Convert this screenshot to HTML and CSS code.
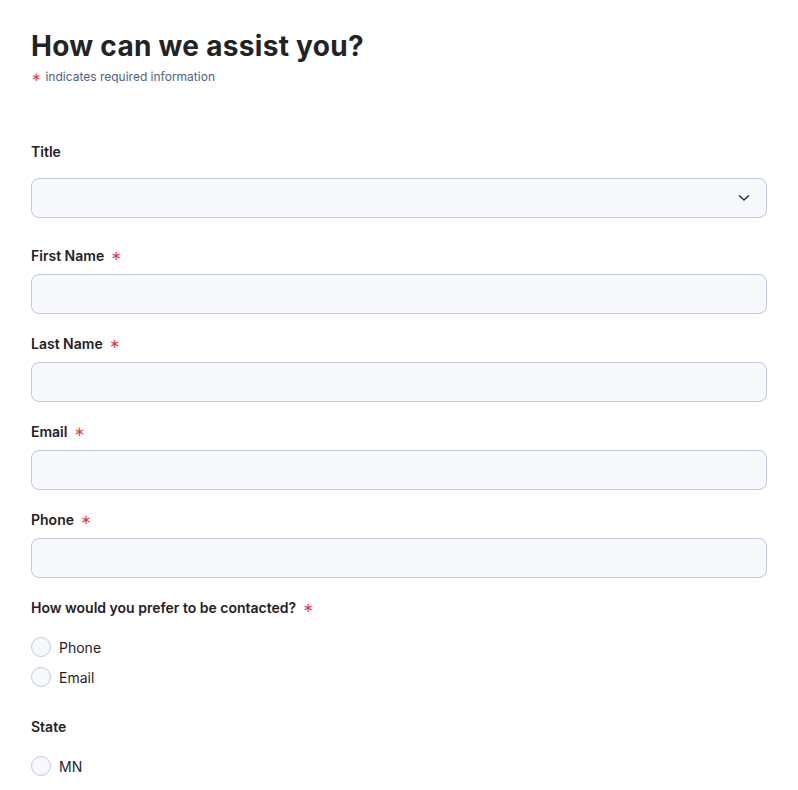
FILE: index.html
```html
<!DOCTYPE html>
<html lang="en">
<head>
<meta charset="utf-8">
<title>How can we assist you?</title>
<link rel="stylesheet" href="styles.css">
</head>
<body>
<main class="page">
  <header class="head">
    <h1 class="title">How can we assist you?</h1>
    <p class="note"><span class="req">∗</span> indicates required information</p>
  </header>
  <form class="form">
    <div class="field field-select">
      <label class="label">Title</label>
      <div class="select">
        <svg class="chev" width="12" height="8" viewBox="0 0 12 8"><path d="M1.5 1.8 L6 6 L10.5 1.8" fill="none" stroke="#2a2f3a" stroke-width="1.5" stroke-linecap="round" stroke-linejoin="round"/></svg>
      </div>
    </div>
    <div class="field">
      <label class="label">First Name <span class="req">∗</span></label>
      <div class="input"></div>
    </div>
    <div class="field">
      <label class="label">Last Name <span class="req">∗</span></label>
      <div class="input"></div>
    </div>
    <div class="field">
      <label class="label">Email <span class="req">∗</span></label>
      <div class="input"></div>
    </div>
    <div class="field">
      <label class="label">Phone <span class="req">∗</span></label>
      <div class="input"></div>
    </div>
    <div class="field group">
      <label class="label">How would you prefer to be contacted? <span class="req">∗</span></label>
      <div class="radios">
        <div class="radio"><span class="circle"></span><span>Phone</span></div>
        <div class="radio"><span class="circle"></span><span>Email</span></div>
      </div>
    </div>
    <div class="field group state">
      <label class="label">State</label>
      <div class="radios">
        <div class="radio"><span class="circle"></span><span class="mn">MN</span></div>
      </div>
    </div>
  </form>
</main>
</body>
</html>
```
FILE: styles.css
```css
* { box-sizing: border-box; }
html, body { margin: 0; background: #ffffff; }
body {
  font-family: Inter, "Noto Sans", sans-serif;
  color: #1f2127;
}
.page {
  padding: 28px 31px 0 31px;
}
.head { display: flex; flex-direction: column; }
.title {
  margin: 0;
  font-family: Inter, sans-serif;
  font-weight: 700;
  font-size: 28px;
  line-height: 36px;
  letter-spacing: 0.3px;
  color: #222326;
}
.note {
  margin: 5px 0 0 0;
  font-size: 12px;
  line-height: 16px;
  height: 16px;
  color: #4f6285;
}
.req {
  color: #e0323c;
  font-family: "DejaVu Sans", sans-serif;
  font-weight: 400;
  display: inline-block;
  vertical-align: top;
}
.note .req { font-size: 12px; margin-right: 1px; height: 16px; line-height: 17px; }
.form {
  display: flex;
  flex-direction: column;
  margin-top: 57px;
}
.field {
  display: flex;
  flex-direction: column;
  margin-bottom: 20px;
}
.field-select { margin-bottom: 28px; }
.label {
  font-size: 14px;
  line-height: 20px;
  height: 20px;
  font-weight: 600;
  color: #1f2127;
  margin-bottom: 8px;
}
.label .req { margin-left: 3px; font-size: 13px; height: 20px; line-height: 20px; }
.field-select .label { margin-bottom: 16px; }
.input, .select {
  height: 40px;
  border: 1px solid #c3c9dc;
  border-radius: 8px;
  background: #f7f8fb;
}
.select {
  display: flex;
  align-items: center;
  justify-content: flex-end;
  padding-right: 16px;
}
.group .label { margin-bottom: 14px; }
.group { margin-bottom: 25px; }
.radios { display: flex; flex-direction: column; }
.radio {
  display: flex;
  align-items: center;
  gap: 8px;
  height: 30px;
  font-size: 14px;
  color: #1f2127;
}
.circle {
  width: 20px;
  height: 20px;
  border-radius: 50%;
  border: 1px solid #c3c9dc;
  background: #f7f8fb;
}
.mn { color: #1d2433; }
```
